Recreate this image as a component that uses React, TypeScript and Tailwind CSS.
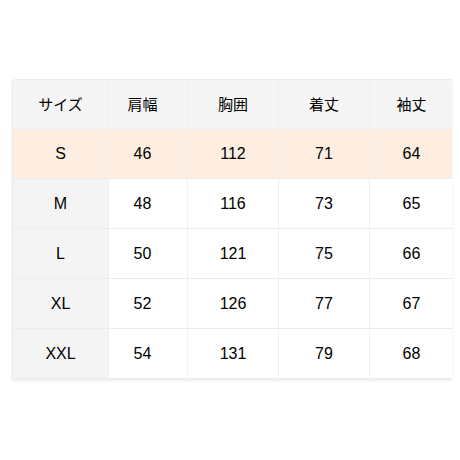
const HEAD = ['サイズ', '肩幅', '胸囲', '着丈', '袖丈'];
const ROWS = [
  ['S', '46', '112', '71', '64'],
  ['M', '48', '116', '73', '65'],
  ['L', '50', '121', '75', '66'],
  ['XL', '52', '126', '77', '67'],
  ['XXL', '54', '131', '79', '68'],
];

const COLS = 'grid grid-cols-[96px_79px_91px_91px_83px]';

export default function App() {
  return (
    <div
      className="w-[460px] h-[460px] bg-white pt-[79px] pl-[12px]"
      style={{ fontFamily: '"Liberation Sans", Arial, "Noto Sans CJK JP", sans-serif' }}
    >
      <div className="w-[440px] rounded-tl-[4px] overflow-hidden border-t border-l border-[#ececec] shadow-[0_2px_3px_rgba(0,0,0,0.08)]">
        <div className={`${COLS} h-[49px] bg-[#f5f5f5] border-b border-[#ededed]`}>
          {HEAD.map((h, i) => (
            <div
              key={h}
              className={`flex items-center justify-center text-[15px] text-black ${i < 4 ? 'border-r border-[#ececec]' : ''} ${i === 1 ? 'pr-[11px]' : ''}`}
              style={{ fontFamily: '"Noto Sans CJK JP", sans-serif' }}
            >
              {h}
            </div>
          ))}
        </div>
        {ROWS.map((r, ri) => (
          <div
            key={r[0]}
            className={`${COLS} h-[50px] border-b border-[#ececec] ${ri === 0 ? 'bg-[#fdeee1]' : 'bg-white'}`}
          >
            {r.map((c, i) => (
              <div
                key={i}
                className={`flex items-center justify-center text-[16px] text-black ${i < 4 ? 'border-r border-[#f0f0f0]' : ''} ${i === 1 ? 'pr-[11px]' : ''} ${i === 0 && ri > 0 ? 'bg-[#f4f4f4]' : ''}`}
              >
                {c}
              </div>
            ))}
          </div>
        ))}
      </div>
    </div>
  );
}
